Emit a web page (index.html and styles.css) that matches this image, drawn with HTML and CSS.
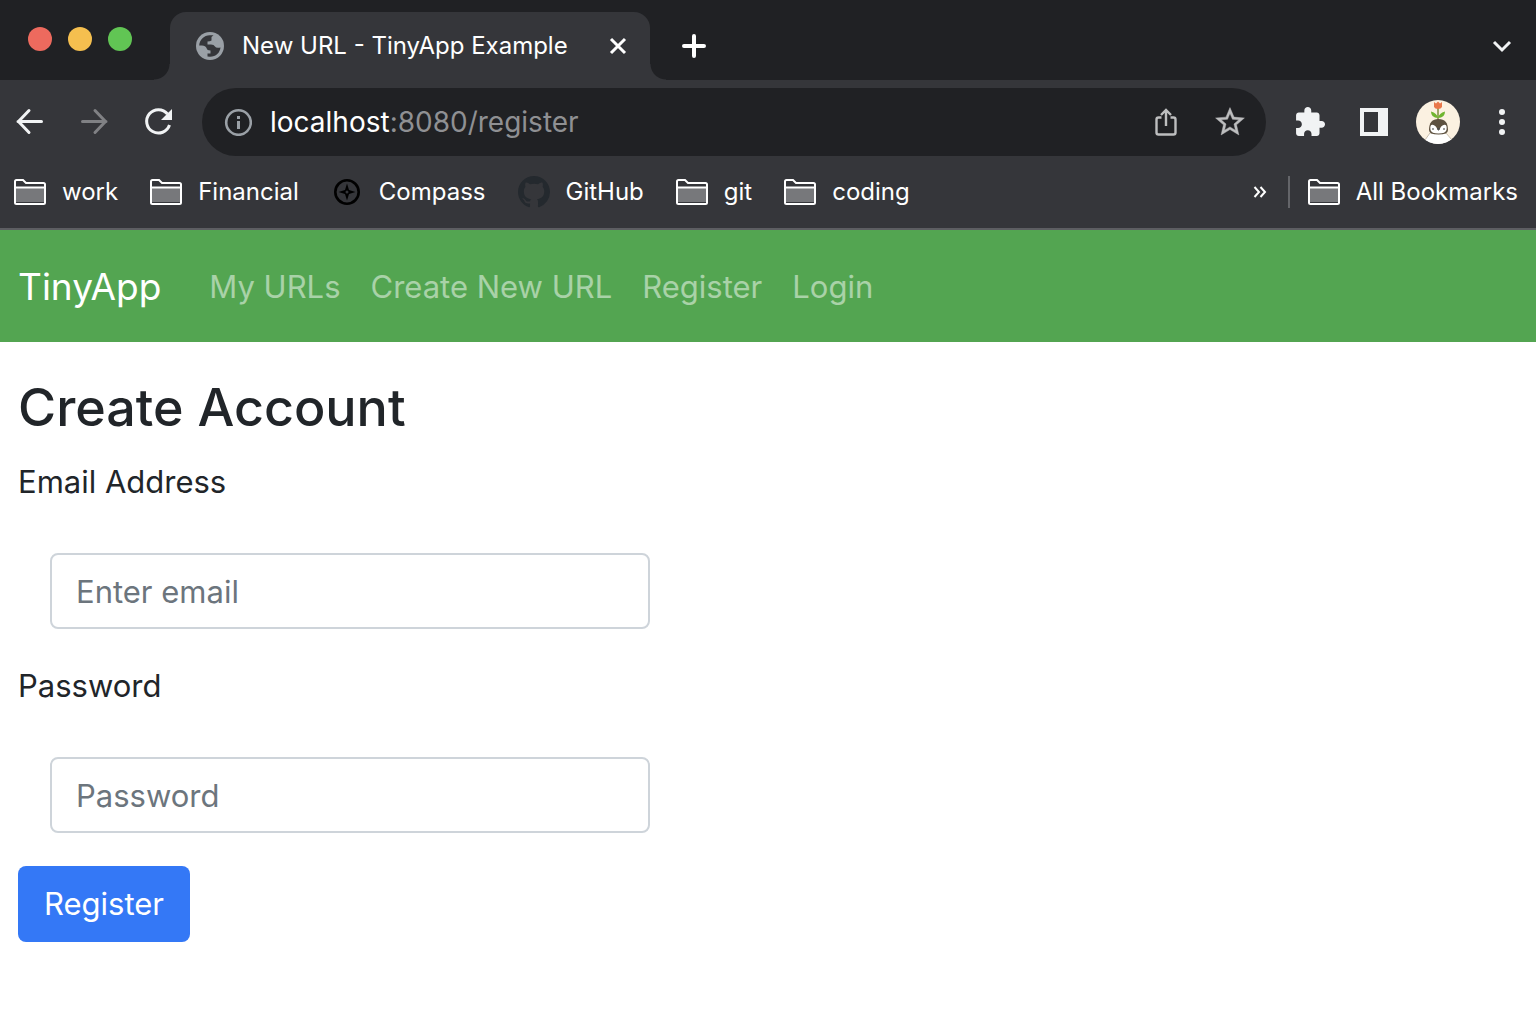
FILE: index.html
```html
<!DOCTYPE html>
<html lang="en">
<head>
<meta charset="utf-8">
<meta name="viewport" content="width=device-width, initial-scale=1">
<title>New URL - TinyApp Example</title>
<link rel="stylesheet" href="styles.css">
</head>
<body>
<svg class="sprite" aria-hidden="true">
  <symbol id="folder" viewBox="0 0 32 26">
    <path d="M2 9h28v14H2z" fill="#77787b"/>
    <path d="M1 23.500V2.500Q1 1 2.500 1H9l3 3h17.500Q31 4 31 5.500v18q0 1.500-1.500 1.500h-27Q1 25 1 23.500zM1 8.500h30" fill="none" stroke="#fff" stroke-width="2"/>
  </symbol>
</svg>

<header class="browser">
  <div class="tabstrip">
    <div class="lights"><span class="light red"></span><span class="light yellow"></span><span class="light green"></span></div>
    <div class="tab">
      <svg width="28" height="28" viewBox="0 0 28 28" aria-hidden="true"><circle cx="14" cy="14" r="14" fill="#9aa0a6"/><path d="M3.200 13.500C3.500 7.500 8.500 3 14 3.200H17.500L15.500 5V8.500Q14 9.500 11.500 9.500V12.500H15Q18 12.500 19 14.500Q20 16.500 24.500 15.500C24 20.500 20 24.800 14 24.800L11.500 24.500V21.500H14.500V18.500Q11 18.500 10.500 16Q9.500 13.500 6 13.500Z" fill="#35363a"/></svg>
      <span class="tab-title">New URL - TinyApp Example</span>
      <button class="icon-btn small" aria-label="Close tab"><svg width="20" height="20" viewBox="0 0 20 20"><path d="M3 3l14 14M17 3L3 17" stroke="#fff" stroke-width="3"/></svg></button>
    </div>
    <button class="icon-btn new-tab" aria-label="New tab"><svg width="24" height="24" viewBox="0 0 24 24"><path d="M12 2v20M2 12h20" stroke="#fff" stroke-width="4" stroke-linecap="round"/></svg></button>
    <button class="icon-btn tab-search" aria-label="Search tabs"><svg width="24" height="24" viewBox="0 0 24 24"><path d="M4 8l8 8 8-8" fill="none" stroke="#f1f3f4" stroke-width="3"/></svg></button>
  </div>

  <div class="toolbar">
    <div class="tools">
      <button class="icon-btn" aria-label="Back"><svg width="44" height="44" viewBox="0 0 44 44"><path d="M33.500 21.500H10M21 10.500L10.500 21.500 21 32.500" fill="none" stroke="#f1f3f4" stroke-width="3" stroke-linecap="round"/></svg></button>
      <button class="icon-btn" aria-label="Forward"><svg width="44" height="44" viewBox="0 0 44 44"><path d="M10.500 21.500h23.500M23 10.500l10.500 11L23 32.500" fill="none" stroke="#808184" stroke-width="3" stroke-linecap="round"/></svg></button>
      <button class="icon-btn" aria-label="Reload"><svg width="44" height="44" viewBox="0 0 44 44"><path d="M31.500 14A11.700 11.700 0 1 0 33.500 25" fill="none" stroke="#f1f3f4" stroke-width="3"/><path d="M36 9v11H25z" fill="#f1f3f4"/></svg></button>
    </div>
    <div class="omnibox">
      <svg width="28" height="28" viewBox="0 0 28 28" aria-hidden="true"><circle cx="14.500" cy="14.500" r="12.300" fill="none" stroke="#9aa0a6" stroke-width="2.600"/><path d="M13 13h3v8h-3zM13 8h3v3h-3z" fill="#9aa0a6"/></svg>
      <span class="url"><span class="host">localhost</span>:8080/register</span>
      <button class="icon-btn" aria-label="Share"><svg width="44" height="44" viewBox="0 0 44 44"><path d="M17.500 17.500h-3q-2 0-2 2v13q0 2 2 2h15q2 0 2-2v-13q0-2-2-2h-3M22 26V11M17 15l5-5 5 5" fill="none" stroke="#bdbebf" stroke-width="2.400"/></svg></button>
      <button class="icon-btn" aria-label="Bookmark this tab"><svg width="44" height="44" viewBox="0 0 44 44"><path transform="translate(4.700 4.700) scale(1.440)" fill="#bdbebf" stroke="#bdbebf" stroke-width=".3" d="M22 9.240l-7.190-.620L12 2 9.190 8.630 2 9.240l5.460 4.730L5.820 21 12 17.270 18.180 21l-1.630-7.030L22 9.240zM12 15.400l-3.760 2.270 1-4.280-3.320-2.880 4.380-.380L12 6.100l1.710 4.040 4.380.380-3.320 2.880 1 4.280L12 15.400z"/></svg></button>
    </div>
    <div class="tools">
      <button class="icon-btn" aria-label="Extensions"><svg width="44" height="44" viewBox="0 0 44 44"><path transform="translate(5.300 5.700) scale(1.380)" fill="#f1f3f4" d="M20.500 11H19V7c0-1.100-.9-2-2-2h-4V3.500C13 2.120 11.880 1 10.500 1S8 2.120 8 3.500V5H4c-1.100 0-1.990.9-1.990 2v3.800H3.500c1.490 0 2.700 1.210 2.700 2.700s-1.210 2.700-2.700 2.700H2V20c0 1.100.9 2 2 2h3.800v-1.500c0-1.490 1.210-2.700 2.700-2.700 1.490 0 2.700 1.210 2.700 2.700V22H17c1.100 0 2-.9 2-2v-4h1.500c1.380 0 2.500-1.120 2.500-2.500S21.880 11 20.500 11z"/></svg></button>
      <button class="icon-btn" aria-label="Side panel"><svg width="44" height="44" viewBox="0 0 44 44"><path fill="#f1f3f4" fill-rule="evenodd" d="M8 8h28v28H8zM12 12v20h14V12z"/></svg></button>
      <button class="icon-btn" aria-label="Profile"><svg width="44" height="44" viewBox="0 0 44 44">
        <clipPath id="face"><circle cx="22" cy="22" r="22"/></clipPath>
        <g clip-path="url(#face)">
          <path fill="#fbf1e1" d="M0 0h44v44H0z"/>
          <path d="M14 33L9 40v6h27v-6l-6-7z" fill="#fff" stroke="#c9bfae"/>
          <path d="M22 8v12" stroke="#7d8b3c" stroke-width="1.500"/>
          <path d="M18 2l2 1.500L22 1.500l2 2L26 2v5q-1 2-4 2t-4-2z" fill="#e9784b"/>
          <path d="M22 18q-1-5-7-6.500 0 6.500 7 6.500zM22 18q1-5 7-6.500 0 6.500-7 6.500z" fill="#6fb52f"/>
          <path d="M13 30q0-11 9.500-11T32 30q0 4.500-9.500 4.500T13 30z" fill="#5d5140"/>
          <path d="M14.500 30q-1-6 3-5 3 1 4 5h2q1-4 4-5 4-1 3 5-1 3.500-8 3.500t-8-3.500z" fill="#fff"/>
          <circle cx="17" cy="29" r=".8" fill="#222"/><circle cx="28" cy="29" r=".8" fill="#222"/>
          <path d="M21 28h3l-1.500 3z" fill="#4b4b4b"/>
        </g></svg></button>
      <button class="icon-btn" aria-label="Menu"><svg width="44" height="44" viewBox="0 0 44 44" fill="#f1f3f4"><circle cx="22" cy="12" r="3"/><circle cx="22" cy="22" r="3"/><circle cx="22" cy="32" r="3"/></svg></button>
    </div>
  </div>

  <nav class="bookmarks" aria-label="Bookmarks">
    <a class="bookmark" href="#"><svg width="32" height="26"><use href="#folder"/></svg>work</a>
    <a class="bookmark" href="#"><svg width="32" height="26"><use href="#folder"/></svg>Financial</a>
    <a class="bookmark" href="#"><svg width="32" height="32" viewBox="0 0 32 32"><circle cx="16" cy="16" r="11.700" fill="none" stroke="#000" stroke-width="2.600"/><path fill-rule="evenodd" d="M16 7.500l2 6.500 6.500 2-6.500 2-2 6.500-2-6.500L7.500 16l6.500-2zM16 14.500a1.500 1.500 0 1 0 0 3 1.500 1.500 0 0 0 0-3z"/></svg>Compass</a>
    <a class="bookmark" href="#"><svg width="32" height="32" viewBox="0 0 16 16"><path fill="#24292e" d="M8 0C3.580 0 0 3.580 0 8c0 3.540 2.290 6.530 5.470 7.590.4.070.55-.17.55-.38 0-.19-.01-.82-.01-1.490-2.010.37-2.530-.49-2.690-.94-.09-.23-.48-.94-.82-1.130-.28-.15-.68-.52-.01-.53.63-.01 1.080.58 1.230.82.72 1.210 1.870.87 2.330.66.07-.52.28-.87.51-1.070-1.780-.2-3.640-.89-3.640-3.950 0-.87.31-1.590.82-2.150-.08-.2-.36-1.020.08-2.120 0 0 .67-.21 2.200.82.64-.18 1.320-.27 2-.27s1.360.09 2 .27c1.530-1.040 2.200-.82 2.200-.82.44 1.100.16 1.920.08 2.120.51.56.82 1.270.82 2.150 0 3.070-1.870 3.750-3.650 3.950.29.25.54.73.54 1.480 0 1.070-.01 1.930-.01 2.200 0 .21.15.46.55.38A8.010 8.010 0 0 0 16 8c0-4.420-3.580-8-8-8z"/></svg>GitHub</a>
    <a class="bookmark" href="#"><svg width="32" height="26"><use href="#folder"/></svg>git</a>
    <a class="bookmark" href="#"><svg width="32" height="26"><use href="#folder"/></svg>coding</a>
    <div class="bookmarks-end">
      <button class="icon-btn small" aria-label="More bookmarks"><svg width="20" height="20" viewBox="0 0 20 20"><path d="M4.500 5l4.500 5-4.500 5M10.500 5l4.500 5-4.500 5" fill="none" stroke="#fff" stroke-width="2"/></svg></button>
      <a class="bookmark all" href="#"><svg width="32" height="26"><use href="#folder"/></svg>All Bookmarks</a>
    </div>
  </nav>
</header>

<nav class="navbar" aria-label="Main">
  <a class="brand" href="#">TinyApp</a>
  <a class="nav-link" href="#">My URLs</a>
  <a class="nav-link" href="#">Create New URL</a>
  <a class="nav-link" href="#">Register</a>
  <a class="nav-link" href="#">Login</a>
</nav>

<main class="content">
  <h1>Create Account</h1>
  <form class="form">
    <label for="email">Email Address</label>
    <input class="field" id="email" type="email" placeholder="Enter email">
    <label for="password">Password</label>
    <input class="field" id="password" type="password" placeholder="Password">
    <button class="submit" type="submit">Register</button>
  </form>
</main>
</body>
</html>
```

FILE: styles.css
```css
* { box-sizing: border-box; }

body {
  margin: 0;
  background: #fff;
  color: #212529;
  font-family: Inter, "Liberation Sans", sans-serif;
  font-size: 31px;
  line-height: 48px;
}

a { color: inherit; text-decoration: none; }
svg { display: block; flex: none; }
.sprite { position: absolute; width: 0; height: 0; }

/* Browser window */
.browser {
  background: #35363a;
  border-bottom: 2px solid #5d5e62;
  color: #fff;
  font-size: 24px;
  line-height: 32px;
}

.icon-btn {
  display: grid;
  place-items: center;
  flex: none;
  width: 44px;
  height: 44px;
  padding: 0;
  border: 0;
  background: none;
}
.icon-btn.small { width: 20px; height: 20px; }

.tabstrip {
  display: flex;
  height: 80px;
  padding-top: 12px;
  background: #202124;
}
.lights { display: flex; gap: 16px; width: 170px; padding: 15px 28px; }
.light { width: 24px; height: 24px; border-radius: 50%; }
.red { background: #ed6a5e; }
.yellow { background: #f5bf4f; }
.green { background: #61c554; }

.tab {
  position: relative;
  display: flex;
  align-items: center;
  gap: 18px;
  width: 480px;
  padding: 0 22px 0 26px;
  border-radius: 16px 16px 0 0;
  background: #35363a;
}
.tab::before,
.tab::after {
  content: "";
  position: absolute;
  bottom: 0;
  width: 16px;
  height: 16px;
}
.tab::before { right: 100%; background: radial-gradient(circle at 0 0, #202124 15px, #35363a 16px); }
.tab::after { left: 100%; background: radial-gradient(circle at 100% 0, #202124 15px, #35363a 16px); }
.tab-title { flex: 1; white-space: nowrap; }
.new-tab { align-self: center; margin-left: 22px; }
.tab-search { align-self: center; margin: 0 12px 0 auto; }

.toolbar { display: flex; align-items: center; gap: 22px; padding: 8px 12px 8px 8px; }
.tools { display: flex; gap: 20px; }
.omnibox {
  display: flex;
  align-items: center;
  gap: 20px;
  flex: 1;
  height: 68px;
  padding: 0 14px 0 22px;
  border-radius: 34px;
  background: #202124;
  font-size: 28px;
}
.url { flex: 1; margin-left: -2px; color: #8f9093; }
.host { color: #fff; }

.bookmarks { display: flex; align-items: center; gap: 32px; height: 64px; padding: 0 18px 8px 14px; }
.bookmark { display: flex; align-items: center; gap: 16px; white-space: nowrap; }
.bookmarks-end { display: flex; align-items: center; gap: 18px; margin-left: auto; }
.all { padding-left: 18px; border-left: 2px solid #646569; }

/* Page */
.navbar {
  display: flex;
  align-items: center;
  gap: 30px;
  padding: 27px 18px 25px;
  background: #53a551;
  line-height: 60px;
}
.brand { margin-right: 18px; color: #fff; font-size: 37px; }
.nav-link { color: rgba(255, 255, 255, 0.5); }

.content { padding: 32px 18px; }
h1 { margin: 0 0 16px; font-size: 52px; font-weight: 500; line-height: 68px; }
.form { display: flex; flex-direction: column; align-items: flex-start; }
.field {
  width: 600px;
  max-width: calc(100% - 64px);
  height: 76px;
  margin: 47px 32px 33px;
  padding: 12px 24px;
  border: 2px solid #ced4da;
  border-radius: 8px;
  background: #fff;
  color: #495057;
  font: inherit;
}
.field::placeholder { color: #6c757d; opacity: 1; }
.submit {
  height: 76px;
  padding: 0 26px;
  border: 0;
  border-radius: 8px;
  background: #3478f6;
  color: #fff;
  font: inherit;
}
```
